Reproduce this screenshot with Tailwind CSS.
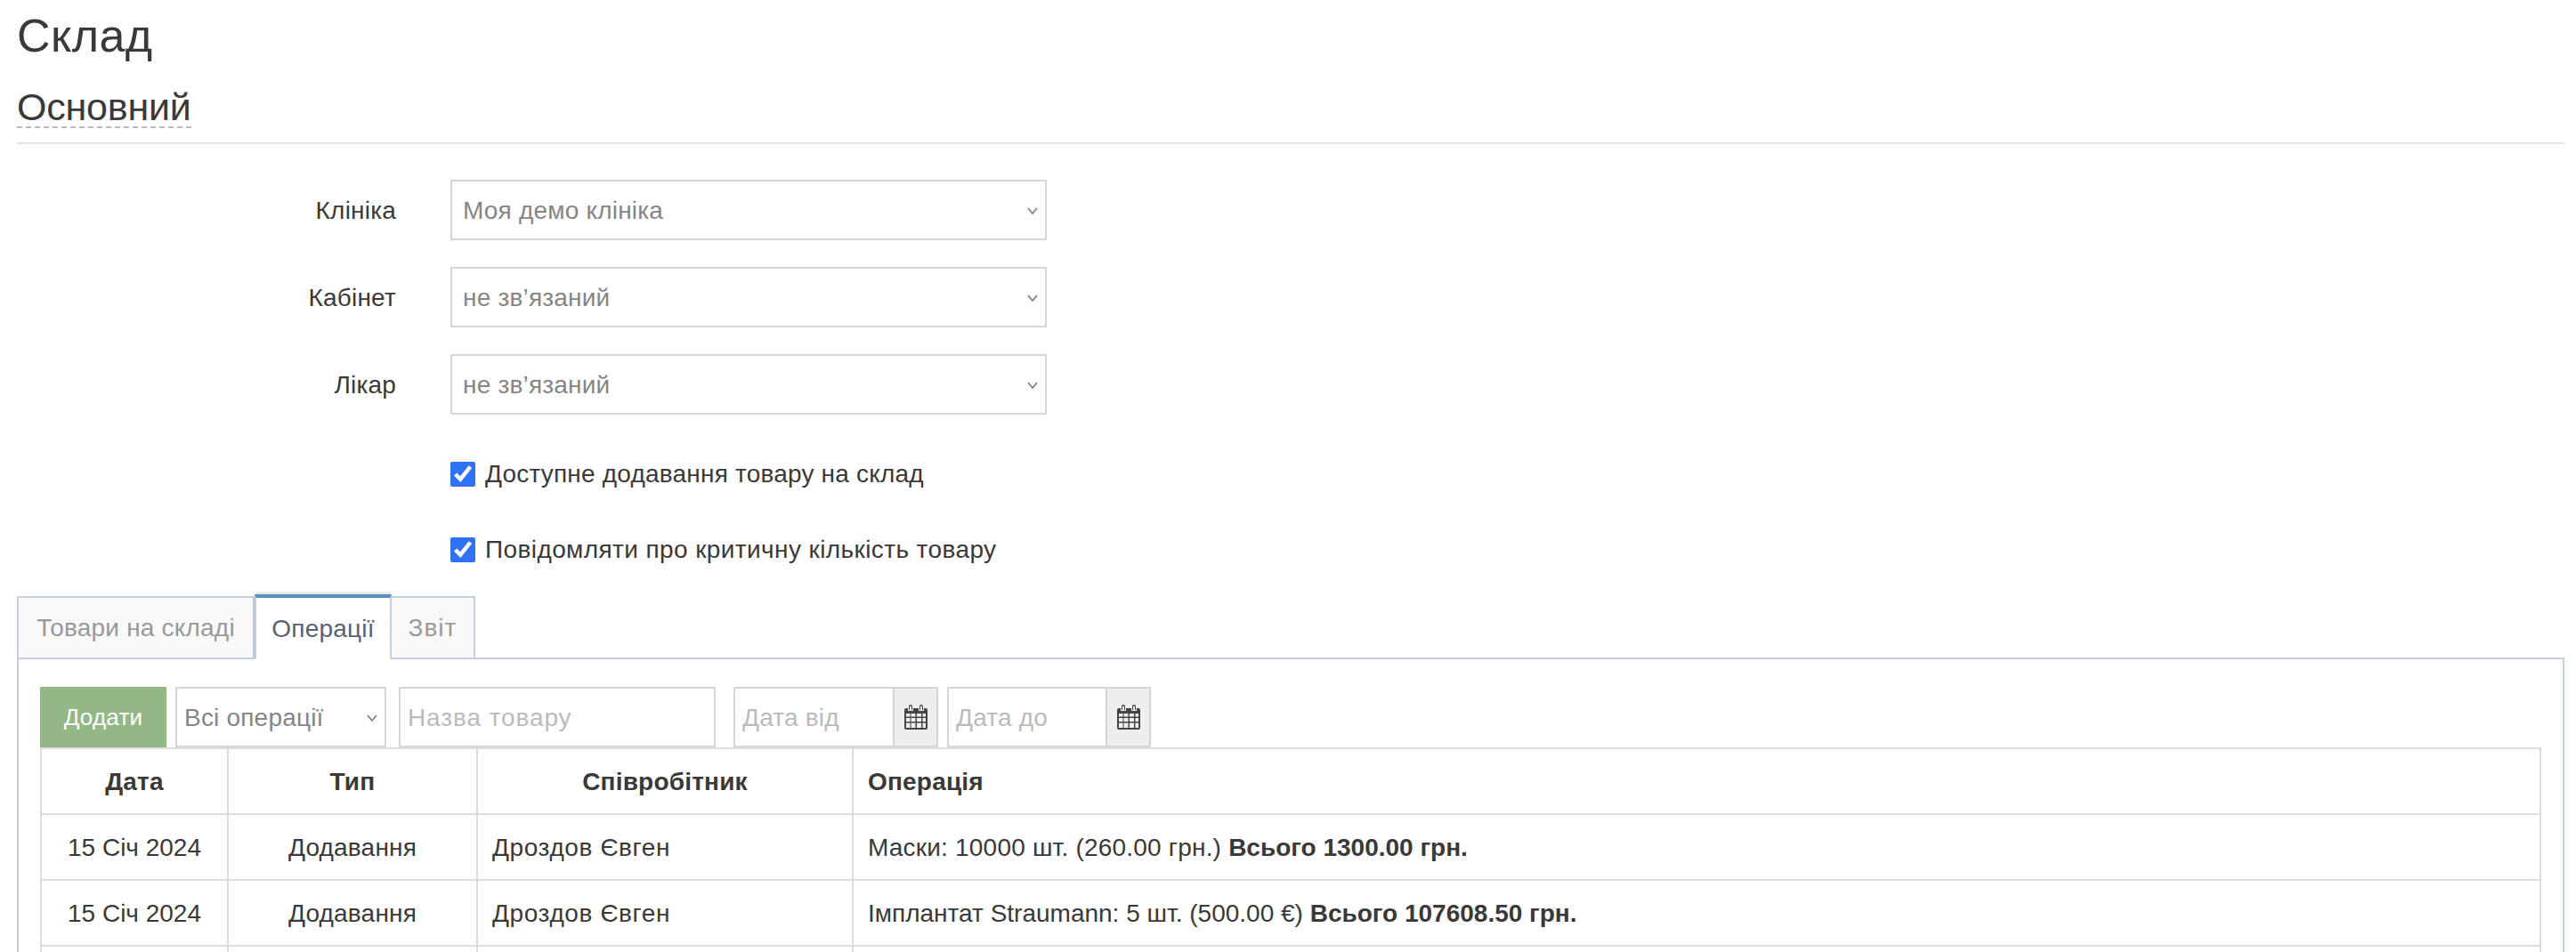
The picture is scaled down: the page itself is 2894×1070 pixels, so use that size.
<!DOCTYPE html>
<html lang="uk"><head><meta charset="utf-8">
<script src="https://cdn.jsdelivr.net/npm/@tailwindcss/browser@4"></script>
</head>
<body class="bg-white font-['Liberation_Sans',Arial,sans-serif] text-[#393939] overflow-hidden h-[1070px]">
<div class="pl-[19px] pr-[13px] h-[1070px] overflow-hidden">
  <h1 class="text-[52px] leading-[52px] tracking-[0.4px] font-normal pt-[14px] h-[86px]">Склад</h1>
  <div class="h-[76px] border-b-2 border-[#e5e5e5]">
    <span class="inline-block text-[43px] leading-[44px] -tracking-[0.2px] h-[58px] border-b-2 border-dashed border-[#bbb] pt-[12px]">Основний</span>
  </div>
  <div class="pt-[40px] text-[28px] tracking-[0.2px]">
    <div class="flex items-center h-[68px] mb-[30px]">
      <label class="w-[426px] text-right pt-[2px]">Клініка</label>
      <div class="relative ml-[61px] w-[670px]">
        <select class="appearance-none w-full h-[68px] border-2 border-[#d5d5d5] px-[12px] pt-[2px] text-[#858585] bg-white"><option>Моя демо клініка</option></select>
        <svg class="absolute right-[10px] top-[30px] w-[12px] h-[10px]" viewBox="0 0 12 10" fill="none" stroke="#777" stroke-width="1.5"><path d="M1 2l5 6 5-6"/></svg>
      </div>
    </div>
    <div class="flex items-center h-[68px] mb-[30px]">
      <label class="w-[426px] text-right pt-[2px]">Кабінет</label>
      <div class="relative ml-[61px] w-[670px]">
        <select class="appearance-none w-full h-[68px] border-2 border-[#d5d5d5] px-[12px] pt-[2px] text-[#858585] bg-white"><option>не зв’язаний</option></select>
        <svg class="absolute right-[10px] top-[30px] w-[12px] h-[10px]" viewBox="0 0 12 10" fill="none" stroke="#777" stroke-width="1.5"><path d="M1 2l5 6 5-6"/></svg>
      </div>
    </div>
    <div class="flex items-center h-[68px]">
      <label class="w-[426px] text-right pt-[2px]">Лікар</label>
      <div class="relative ml-[61px] w-[670px]">
        <select class="appearance-none w-full h-[68px] border-2 border-[#d5d5d5] px-[12px] pt-[2px] text-[#858585] bg-white"><option>не зв’язаний</option></select>
        <svg class="absolute right-[10px] top-[30px] w-[12px] h-[10px]" viewBox="0 0 12 10" fill="none" stroke="#777" stroke-width="1.5"><path d="M1 2l5 6 5-6"/></svg>
      </div>
    </div>
    <div class="flex items-center h-[28px] mt-[53px] ml-[487px] gap-[11px]">
      <input type="checkbox" checked class="w-[28px] h-[28px] m-0 accent-[#2f72f5]"><span>Доступне додавання товару на склад</span>
    </div>
    <div class="flex items-center h-[28px] mt-[57px] ml-[487px] gap-[11px]">
      <input type="checkbox" checked class="w-[28px] h-[28px] m-0 accent-[#2f72f5]"><span class="tracking-[0.4px]">Повідомляти про критичну кількість товару</span>
    </div>
  </div>
  <div class="flex mt-[38px] h-[71px] relative z-10 text-[28px] tracking-[0.2px]">
    <div class="w-[267px] h-[71px] border-2 border-[#c5d0dc] bg-[#f9f9f9] text-[#999] flex items-center justify-center">Товари на складі</div>
    <div class="w-[154px] h-[73px] -mt-[2px] border-x-2 border-[#c5d0dc] border-t-4 border-t-[#5b8dbd] bg-white text-[#576373] flex items-center justify-center shadow-[0_-2px_3px_rgba(0,0,0,0.15)]">Операції</div>
    <div class="w-[94px] h-[71px] border-2 border-l-0 border-[#c5d0dc] bg-[#f9f9f9] text-[#999] flex items-center justify-center tracking-[1px]">Звіт</div>
  </div>
  <div class="border-2 border-b-0 border-[#c5d0dc] -mt-[2px] h-[400px] pt-[31px] px-[24px] text-[28px] tracking-[0.2px]">
    <div class="flex h-[68px]">
      <button class="w-[142px] h-[68px] bg-[#93b886] text-white text-[26px]">Додати</button>
      <div class="relative ml-[10px] w-[237px]">
        <select class="appearance-none w-full h-[68px] border-2 border-[#d5d5d5] px-[8px] pt-[2px] text-[#858585] bg-white"><option>Всі операції</option></select>
        <svg class="absolute right-[10px] top-[30px] w-[12px] h-[10px]" viewBox="0 0 12 10" fill="none" stroke="#777" stroke-width="1.5"><path d="M1 2l5 6 5-6"/></svg>
      </div>
      <input placeholder="Назва товару" class="ml-[14px] w-[356px] h-[68px] border-2 border-[#d5d5d5] px-[8px] pt-[2px] tracking-[0.9px] placeholder:text-[#bbb] outline-none">
      <div class="ml-[20px] flex w-[230px] h-[68px] border-2 border-[#d5d5d5]">
        <input placeholder="Дата від" class="w-[177px] px-[8px] pt-[2px] placeholder:text-[#bbb] outline-none">
        <div class="flex-1 bg-[#eee] border-l-2 border-[#d5d5d5] flex items-center justify-center">
          <svg class="w-[26px] h-[28px]" viewBox="0 0 26 28" fill="#444"><path d="M5 2a2 2 0 0 1 4 0v4H8V2.5a1 1 0 0 0-2 0V6H5zM17 2a2 2 0 0 1 4 0v4h-1V2.5a1 1 0 0 0-2 0V6h-1z"/><path fill-rule="evenodd" d="M2 4h2v3h6V4h6v3h6V4h2a2 2 0 0 1 2 2v20a2 2 0 0 1-2 2H2a2 2 0 0 1-2-2V6a2 2 0 0 1 2-2zM2 10v3.5h4.500V10zm5.500 0v3.500h5V10zm6.500 0v3.500h5V10zm6.500 0v3.500H24V10zM2 15v4h4.500v-4zm5.500 0v4h5v-4zm6.500 0v4h5v-4zm6.500 0v4H24v-4zM2 20.500V26h4.500v-5.500zm5.500 0V26h5v-5.500zm6.500 0V26h5v-5.500zm6.500 0V26H24v-5.500z"/></svg>
        </div>
      </div>
      <div class="ml-[10px] flex w-[229px] h-[68px] border-2 border-[#d5d5d5]">
        <input placeholder="Дата до" class="w-[176px] px-[8px] pt-[2px] placeholder:text-[#bbb] outline-none">
        <div class="flex-1 bg-[#eee] border-l-2 border-[#d5d5d5] flex items-center justify-center">
          <svg class="w-[26px] h-[28px]" viewBox="0 0 26 28" fill="#444"><path d="M5 2a2 2 0 0 1 4 0v4H8V2.5a1 1 0 0 0-2 0V6H5zM17 2a2 2 0 0 1 4 0v4h-1V2.5a1 1 0 0 0-2 0V6h-1z"/><path fill-rule="evenodd" d="M2 4h2v3h6V4h6v3h6V4h2a2 2 0 0 1 2 2v20a2 2 0 0 1-2 2H2a2 2 0 0 1-2-2V6a2 2 0 0 1 2-2zM2 10v3.5h4.500V10zm5.500 0v3.500h5V10zm6.500 0v3.500h5V10zm6.500 0v3.500H24V10zM2 15v4h4.500v-4zm5.500 0v4h5v-4zm6.500 0v4h5v-4zm6.500 0v4H24v-4zM2 20.500V26h4.500v-5.500zm5.500 0V26h5v-5.500zm6.500 0V26h5v-5.500zm6.500 0V26H24v-5.500z"/></svg>
        </div>
      </div>
    </div>
    <table class="w-[2810px] table-fixed border-collapse border-2 border-[#ddd]">
      <colgroup><col class="w-[210px]"><col class="w-[280px]"><col class="w-[422px]"><col></colgroup>
      <tr class="h-[74px] font-bold">
        <th class="border-2 border-[#ddd] pt-[2px]">Дата</th><th class="border-2 border-[#ddd] pt-[2px]">Тип</th><th class="border-2 border-[#ddd] pt-[2px]">Співробітник</th><th class="border-2 border-[#ddd] text-left px-[16px] pt-[2px]">Операція</th>
      </tr>
      <tr class="h-[74px]">
        <td class="border-2 border-[#ddd] text-center tracking-normal pt-[2px]">15 Січ 2024</td><td class="border-2 border-[#ddd] text-center pt-[2px]">Додавання</td><td class="border-2 border-[#ddd] px-[16px] pt-[2px] tracking-[0.6px]">Дроздов Євген</td><td class="border-2 border-[#ddd] px-[16px] pt-[2px]">Маски: 10000 шт. (260.00 грн.) <b class="tracking-normal">Всього 1300.00 грн.</b></td>
      </tr>
      <tr class="h-[74px]">
        <td class="border-2 border-[#ddd] text-center tracking-normal pt-[2px]">15 Січ 2024</td><td class="border-2 border-[#ddd] text-center pt-[2px]">Додавання</td><td class="border-2 border-[#ddd] px-[16px] pt-[2px] tracking-[0.6px]">Дроздов Євген</td><td class="border-2 border-[#ddd] px-[16px] pt-[2px] tracking-normal">Імплантат Straumann: 5 шт. (500.00 €) <b>Всього 107608.50 грн.</b></td>
      </tr>
      <tr class="h-[74px]"><td class="border-2 border-[#ddd]"></td><td class="border-2 border-[#ddd]"></td><td class="border-2 border-[#ddd]"></td><td class="border-2 border-[#ddd]"></td></tr>
    </table>
  </div>
</div>
</body></html>
